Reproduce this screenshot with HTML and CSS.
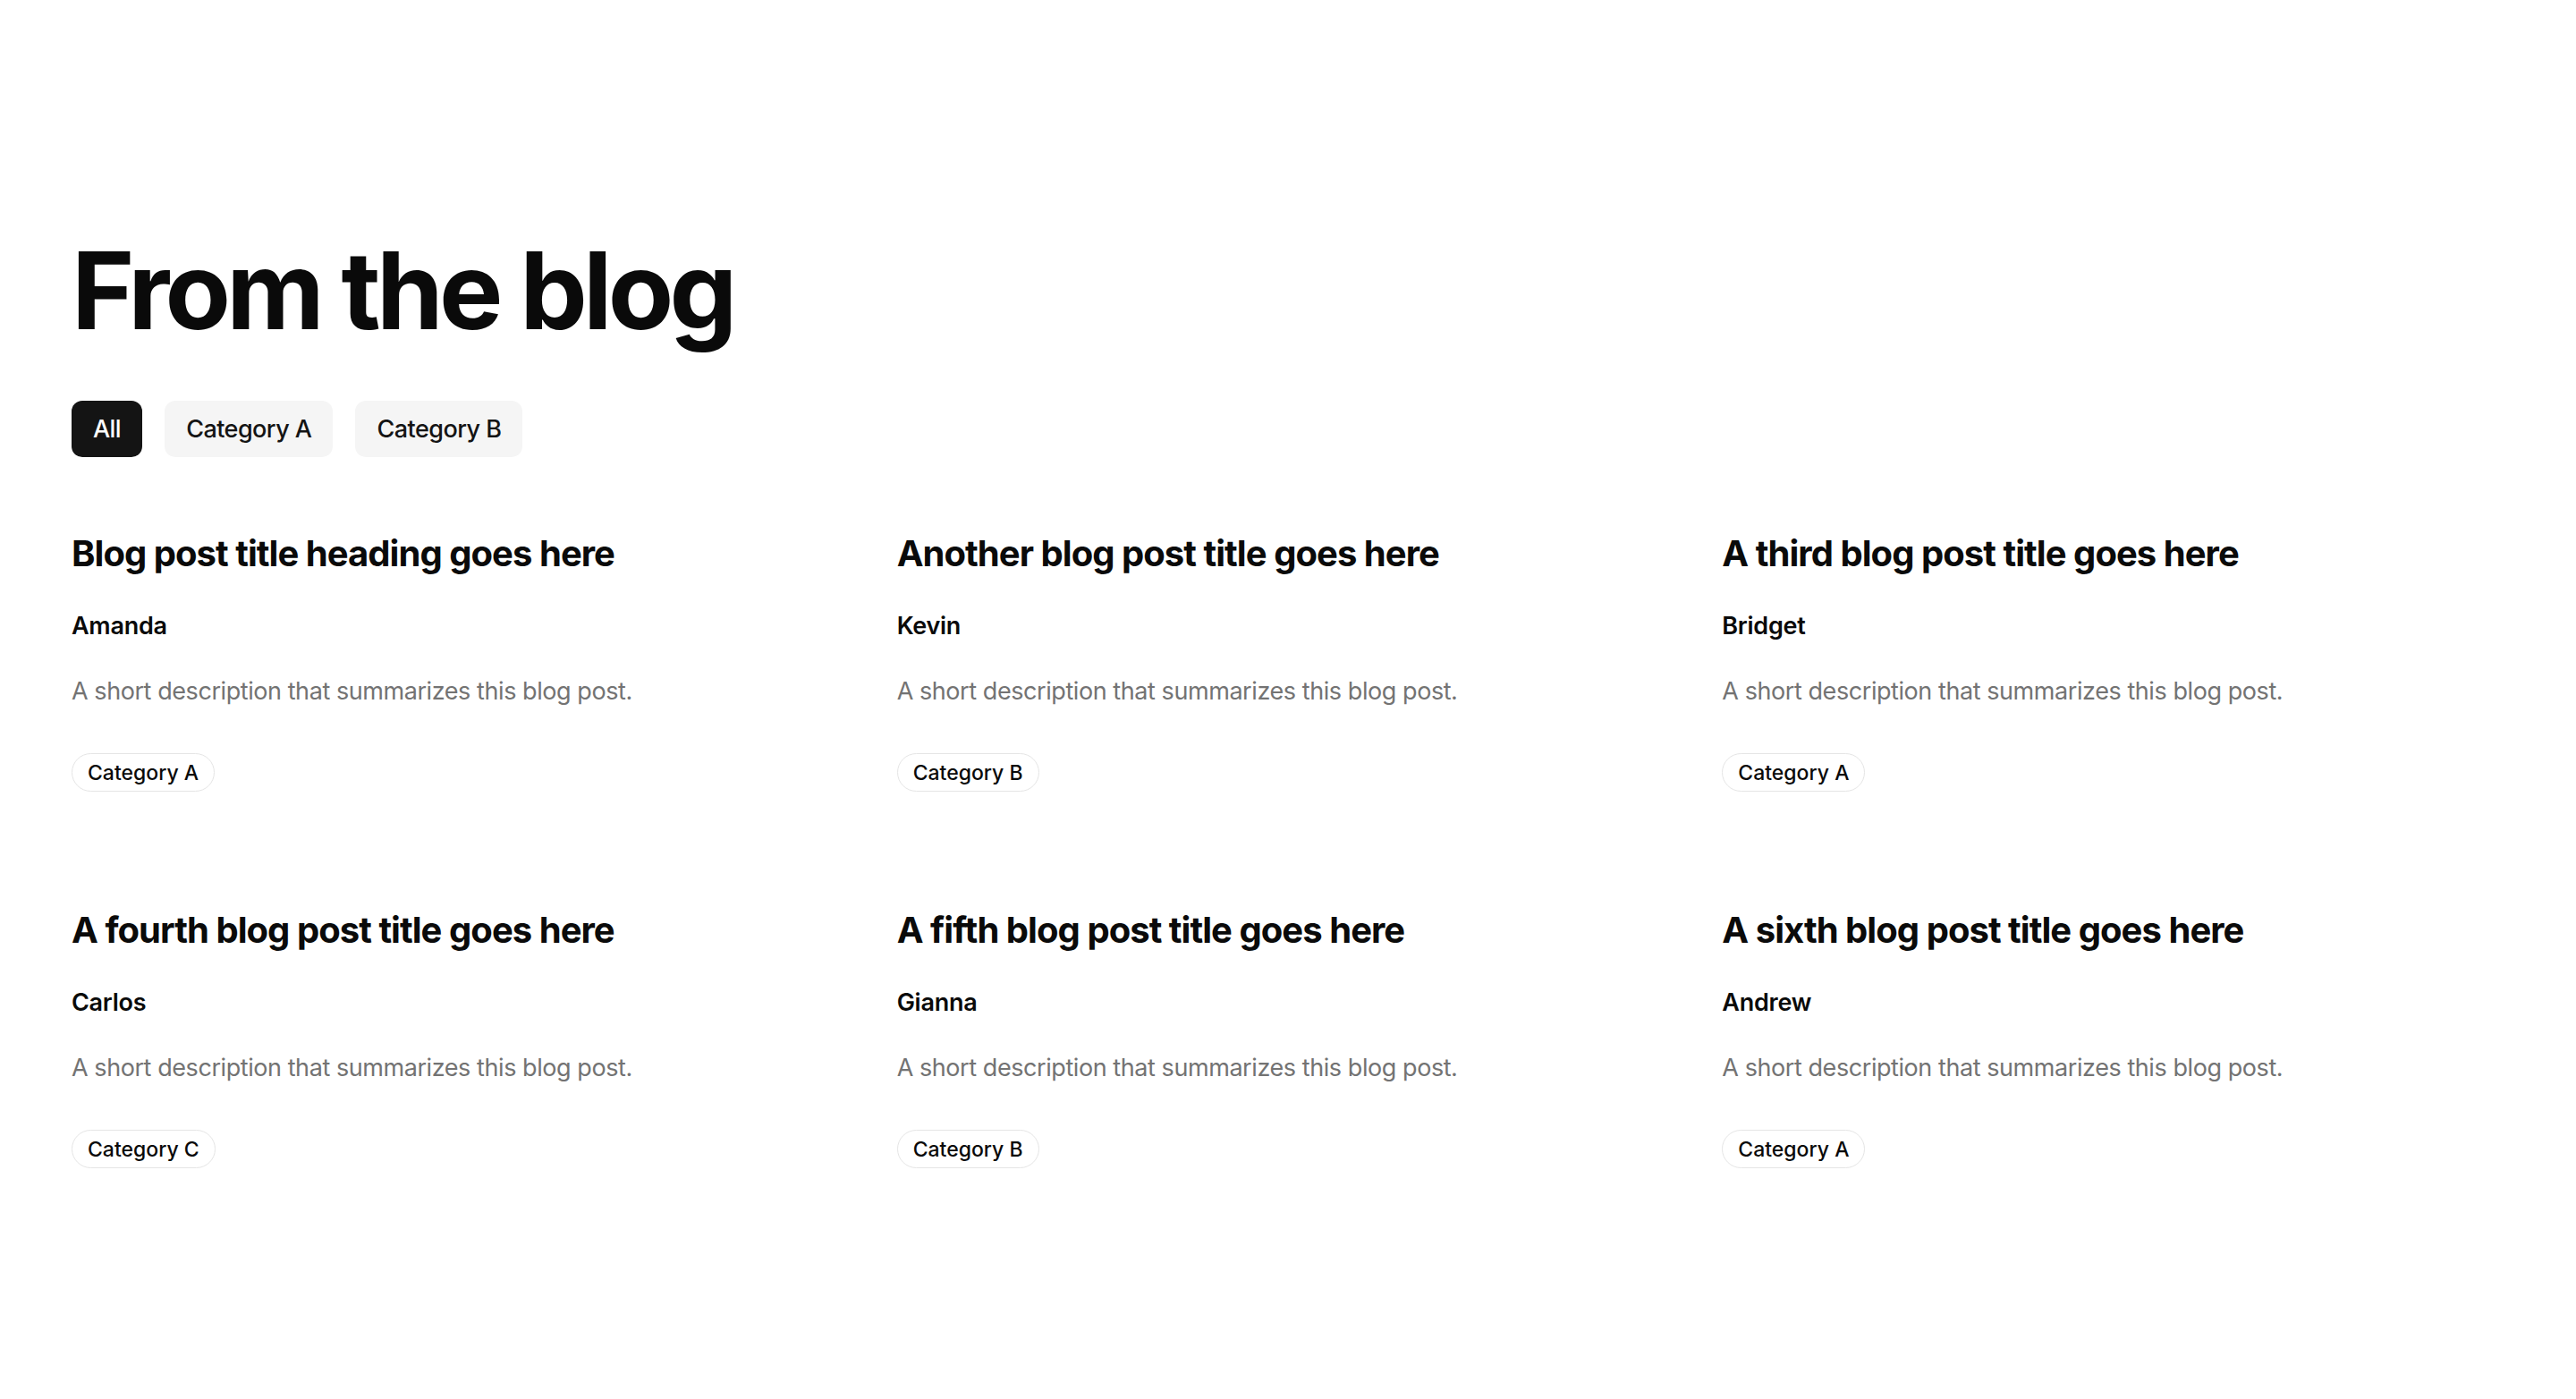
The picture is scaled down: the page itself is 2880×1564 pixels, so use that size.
FILE: index.html
```html
<!DOCTYPE html>
<html lang="en">
<head>
<meta charset="utf-8">
<title>From the blog</title>
<link rel="stylesheet" href="styles.css">
</head>
<body>
<main class="blog">
  <h1 class="blog__title">From the blog</h1>

  <nav class="filters" aria-label="Filter posts by category">
    <button class="filter filter--active" type="button">All</button>
    <button class="filter" type="button">Category A</button>
    <button class="filter" type="button">Category B</button>
  </nav>

  <section class="posts">
    <article class="post">
      <h2 class="post__title">Blog post title heading goes here</h2>
      <p class="post__author">Amanda</p>
      <p class="post__desc">A short description that summarizes this blog post.</p>
      <span class="post__tag">Category A</span>
    </article>
    <article class="post">
      <h2 class="post__title">Another blog post title goes here</h2>
      <p class="post__author">Kevin</p>
      <p class="post__desc">A short description that summarizes this blog post.</p>
      <span class="post__tag">Category B</span>
    </article>
    <article class="post">
      <h2 class="post__title">A third blog post title goes here</h2>
      <p class="post__author">Bridget</p>
      <p class="post__desc">A short description that summarizes this blog post.</p>
      <span class="post__tag">Category A</span>
    </article>
    <article class="post">
      <h2 class="post__title">A fourth blog post title goes here</h2>
      <p class="post__author">Carlos</p>
      <p class="post__desc">A short description that summarizes this blog post.</p>
      <span class="post__tag">Category C</span>
    </article>
    <article class="post">
      <h2 class="post__title">A fifth blog post title goes here</h2>
      <p class="post__author">Gianna</p>
      <p class="post__desc">A short description that summarizes this blog post.</p>
      <span class="post__tag">Category B</span>
    </article>
    <article class="post">
      <h2 class="post__title">A sixth blog post title goes here</h2>
      <p class="post__author">Andrew</p>
      <p class="post__desc">A short description that summarizes this blog post.</p>
      <span class="post__tag">Category A</span>
    </article>
  </section>
</main>
</body>
</html>
```

FILE: styles.css
```css
* {
  box-sizing: border-box;
}

body {
  margin: 0;
  background: #ffffff;
  color: #0a0a0a;
  font-family: Inter, "Noto Sans", "Liberation Sans", sans-serif;
}

.blog {
  padding: 259px 80px 120px;
}

.blog__title {
  margin: 0;
  font-size: 120px;
  line-height: 132px;
  font-weight: 700;
  letter-spacing: -0.04em;
}

/* category filter pills */
.filters {
  display: flex;
  gap: 25px;
  margin-top: 57px;
}

.filter {
  height: 63px;
  padding: 0 24px;
  border: none;
  border-radius: 12px;
  background: #f5f5f5;
  color: #141414;
  font-family: inherit;
  font-size: 27px;
  font-weight: 500;
  letter-spacing: -0.02em;
  line-height: 1;
  cursor: pointer;
}

.filter--active {
  background: #141414;
  color: #ffffff;
}

/* post grid */
.posts {
  display: grid;
  grid-template-columns: repeat(3, 1fr);
  column-gap: 48px;
  row-gap: 131px;
  margin-top: 84px;
}

.post {
  display: flex;
  flex-direction: column;
  align-items: flex-start;
}

.post__title {
  margin: 0;
  font-size: 40px;
  line-height: 48px;
  font-weight: 700;
  letter-spacing: -0.024em;
}

.post__author {
  margin: 39px 0 0;
  font-size: 27px;
  line-height: 36px;
  font-weight: 600;
  letter-spacing: -0.01em;
}

.post__desc {
  margin: 35px 0 0;
  font-size: 27px;
  line-height: 40px;
  color: #737373;
  letter-spacing: -0.016em;
}

.post__tag {
  display: inline-flex;
  align-items: center;
  height: 43px;
  margin-top: 49px;
  padding: 0 17px;
  border: 1.5px solid #e5e5e5;
  border-radius: 999px;
  font-size: 23px;
  font-weight: 500;
  color: #0a0a0a;
}
```
